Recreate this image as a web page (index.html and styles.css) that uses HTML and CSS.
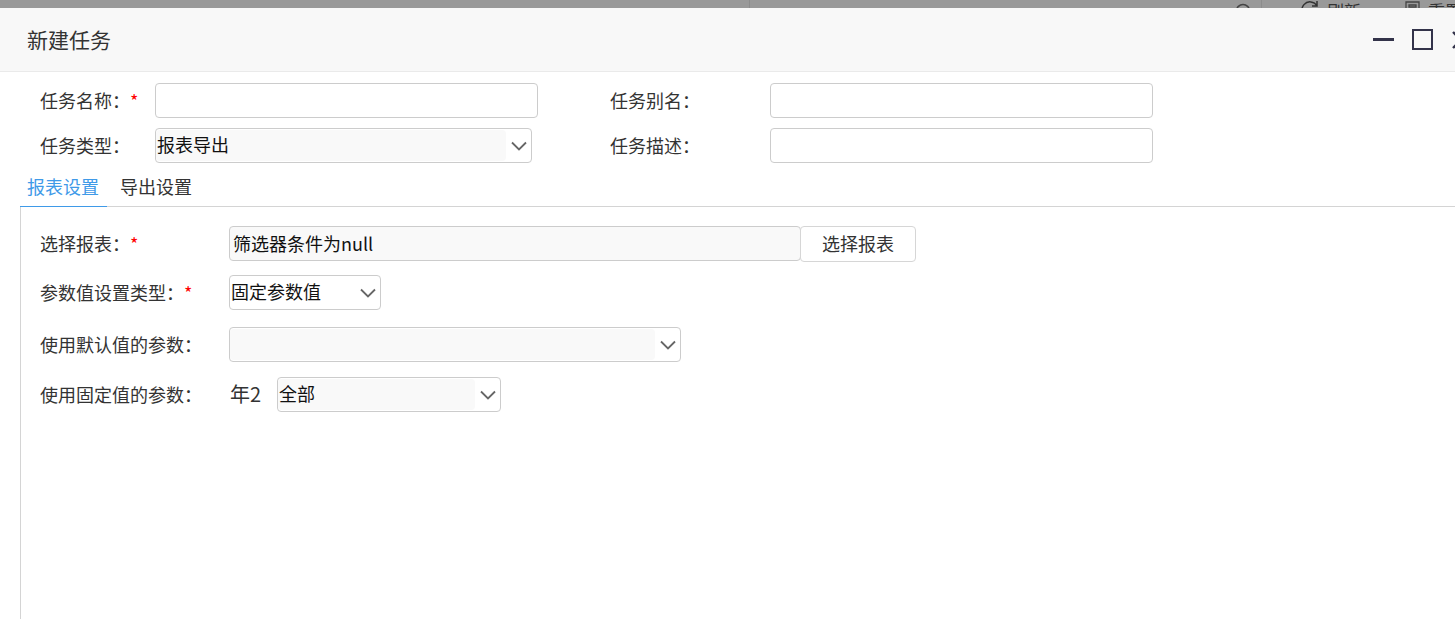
FILE: index.html
```html
<!DOCTYPE html>
<html lang="zh-CN">
<head>
<meta charset="utf-8">
<title>新建任务</title>
<link rel="stylesheet" href="styles.css">
</head>
<body>
<div class="backdrop">
  <div class="rule rule-mid"></div>
  <svg class="bd-search" width="18" height="18" viewBox="0 0 18 18"><circle cx="8" cy="8" r="6.5" fill="none" stroke="#444" stroke-width="1.5"/></svg>
  <div class="rule rule-right"></div>
  <svg class="bd-refresh" width="20" height="20" viewBox="0 0 20 20"><path d="M17 6A8 8 0 1 0 18 10M17 1v5h-5" fill="none" stroke="#333" stroke-width="1.5"/></svg>
  <span class="bd-text bd-text-a">刷新</span>
  <svg class="bd-doc" width="16" height="18" viewBox="0 0 16 18"><path d="M1 1h13v16H1zM4 4h7v2H4z" fill="none" stroke="#444" stroke-width="1.3"/></svg>
  <span class="bd-text">重置</span>
</div>
<div class="dialog">
  <header class="head">
    <h1 class="title">新建任务</h1>
    <div class="controls">
      <svg class="ctl-min" width="21" height="3" viewBox="0 0 21 3"><rect width="21" height="3" fill="#33334a"/></svg>
      <svg class="ctl-max" width="21" height="21" viewBox="0 0 21 21"><rect x="1" y="1" width="19" height="19" fill="none" stroke="#33334a" stroke-width="2"/></svg>
      <svg class="ctl-close" width="20" height="20" viewBox="0 0 20 20"><path d="M2 2l16 16M18 2L2 18" stroke="#33334a" stroke-width="2.4" fill="none"/></svg>
    </div>
  </header>

  <section class="basic">
    <div class="basic-row">
      <label class="lbl lbl-basic">任务名称：<span class="req">*</span></label>
      <div class="input input-name"></div>
      <label class="lbl lbl-alt">任务别名：</label>
      <div class="input input-alt"></div>
    </div>
    <div class="basic-row">
      <label class="lbl lbl-basic">任务类型：</label>
      <div class="select select-type"><span class="sel-value">报表导出</span><svg class="chev" width="18" height="10" viewBox="0 0 18 10"><path d="M2 1.5l7 7 7-7" fill="none" stroke="#666" stroke-width="1.8"/></svg></div>
      <label class="lbl lbl-alt lbl-after-type">任务描述：</label>
      <div class="input input-alt"></div>
    </div>
  </section>

  <nav class="tabs">
    <span class="tab tab-active">报表设置</span>
    <span class="tab">导出设置</span>
  </nav>

  <section class="panel">
    <div class="row row-report">
      <label class="lbl lbl-panel">选择报表：<span class="req">*</span></label>
      <div class="report-field">筛选器条件为null</div>
      <button class="btn" type="button">选择报表</button>
    </div>
    <div class="row row-kind">
      <label class="lbl lbl-panel">参数值设置类型：<span class="req">*</span></label>
      <div class="select select-kind"><span class="sel-value sel-plain">固定参数值</span><svg class="chev" width="18" height="10" viewBox="0 0 18 10"><path d="M2 1.5l7 7 7-7" fill="none" stroke="#666" stroke-width="1.8"/></svg></div>
    </div>
    <div class="row row-default">
      <label class="lbl lbl-panel">使用默认值的参数：</label>
      <div class="select select-default"><span class="sel-value"></span><svg class="chev" width="18" height="10" viewBox="0 0 18 10"><path d="M2 1.5l7 7 7-7" fill="none" stroke="#666" stroke-width="1.8"/></svg></div>
    </div>
    <div class="row row-fixed">
      <label class="lbl lbl-panel">使用固定值的参数：</label>
      <span class="param-name">年2</span>
      <div class="select select-year"><span class="sel-value">全部</span><svg class="chev" width="18" height="10" viewBox="0 0 18 10"><path d="M2 1.5l7 7 7-7" fill="none" stroke="#666" stroke-width="1.8"/></svg></div>
    </div>
  </section>
</div>
</body>
</html>
```
FILE: styles.css
```css
* { box-sizing: border-box; }
html, body { margin: 0; padding: 0; height: 619px; overflow: hidden; background: #fff; }
body { font-family: "Microsoft YaHei", "Noto Sans CJK SC", "Liberation Sans", sans-serif; color: #333; }

.backdrop { height: 8px; background: #999; overflow: hidden; display: flex; align-items: flex-start; font-size: 17px; color: #333; }
.rule { width: 1px; height: 8px; background: #8c8c8c; flex: none; }
.rule-mid { margin-left: 749px; }
.bd-search { flex: none; margin-left: 485px; margin-top: 3px; }
.rule-right { margin-left: 8px; }
.bd-refresh { flex: none; margin-left: 38px; margin-top: 0; }
.bd-text { flex: none; line-height: 20px; margin-left: 7px; margin-top: 1px; white-space: nowrap; }
.bd-doc { flex: none; margin-left: 44px; margin-top: 1px; }
.bd-text-a { margin-right: 0; }

.dialog { width: 1475px; height: 611px; background: #fff; display: flex; flex-direction: column; }
.head { flex: none; height: 64px; background: #f8f8f8; border-bottom: 1px solid #eaeaea; display: flex; align-items: center; justify-content: space-between; padding: 0 3px 0 27px; }
.title { margin: 0 0 2px; font-size: 21px; font-weight: 400; line-height: 28px; color: #333; }
.controls { display: flex; align-items: center; gap: 18px; margin-right: 1px; }

.basic { padding: 11px 0 0 40px; }
.basic-row { display: flex; align-items: center; height: 35px; margin-bottom: 10px; }
.lbl { flex: none; font-size: 18px; line-height: 24px; padding-bottom: 2px; color: #333; white-space: nowrap; }
.lbl-basic { width: 115px; }
.lbl-alt { width: 160px; margin-left: 72px; }
.lbl-after-type { margin-left: 78px; }
.req { color: #f00; }

.input { flex: none; height: 35px; border: 1px solid #ccc; border-radius: 4px; background: #fff; }
.input-name { width: 383px; }
.input-alt { width: 383px; }

.select { flex: none; height: 35px; border: 1px solid #ccc; border-radius: 4px; background: #fff; display: flex; align-items: center; padding: 1px 0 1px 0; }
.sel-value { flex: 1; height: 31px; margin-bottom: 1px; border-radius: 4px; background: #f9f9f9; font-size: 18px; line-height: 28px; color: #111; padding-left: 1px; white-space: nowrap; }
.sel-plain { background: #fff; }
.chev { flex: none; margin: 0 3px 0 4px; }
.select-type { width: 377px; }
.select-kind { width: 152px; }
.select-default { width: 452px; }
.select-year { width: 224px; }

.tabs { display: flex; margin-left: 20px; height: 36px; border-bottom: 1px solid #d4d4d4; margin-top: -2px; }
.tab { font-size: 18px; line-height: 30px; color: #333; padding: 0 7px; margin-right: 6px; height: 36px; }
.tab-active { color: #3f9ae8; border-bottom: 1px solid #3f9ae8; padding-right: 8px; }

.panel { flex: 1; margin-left: 20px; border-left: 1px solid #d4d4d4; padding: 19px 0 0 19px; }
.row { display: flex; align-items: center; }
.row .lbl-panel { width: 189px; }
.row-report { height: 36px; align-items: flex-start; }
.row-report .lbl { line-height: 35px; padding-bottom: 0; }
.row-kind { margin-top: 13px; height: 35px; }
.row-default { margin-top: 17px; height: 35px; }
.row-fixed { margin-top: 15px; height: 35px; }
.report-field { flex: none; width: 572px; height: 35px; border: 1px solid #ccc; border-radius: 4px; background: #f9f9f9; font-size: 18px; line-height: 32px; padding-left: 3px; color: #111; }
.btn { flex: none; width: 116px; height: 36px; margin-left: -1px; background: #fff; border: 1px solid #d6d6d6; border-radius: 4px; font: inherit; font-size: 18px; color: #333; padding: 0 0 2px; }
.param-name { flex: none; width: 48px; font-size: 20px; padding-left: 1px; padding-bottom: 2px; color: #333; }
```
